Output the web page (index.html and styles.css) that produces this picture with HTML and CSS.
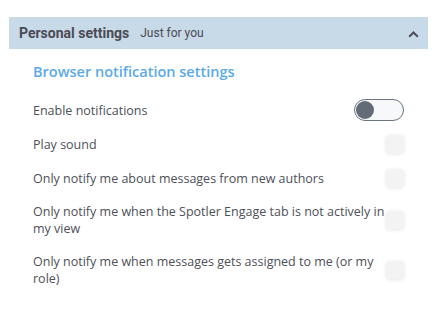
FILE: index.html
```html
<!DOCTYPE html>
<html lang="en">
<head>
<meta charset="utf-8">
<title>Personal settings</title>
<link rel="stylesheet" href="styles.css">
</head>
<body>
<div class="panel">
  <div class="panel-header">
    <span class="panel-title">Personal settings</span>
    <span class="panel-sub">Just for you</span>
    <svg class="chevron" width="11" height="7" viewBox="0 0 11 7">
      <path d="M1.2 5.8 L5.5 1.5 L9.8 5.8" fill="none" stroke="#4a4f5a" stroke-width="2"/>
    </svg>
  </div>
  <div class="panel-body">
    <h2 class="section-title">Browser notification settings</h2>
    <div class="setting">
      <span class="label">Enable notifications</span>
      <span class="toggle"><span class="knob"></span></span>
    </div>
    <div class="setting">
      <span class="label">Play sound</span>
      <span class="check"></span>
    </div>
    <div class="setting">
      <span class="label">Only notify me about messages from new authors</span>
      <span class="check"></span>
    </div>
    <div class="setting">
      <span class="label">Only notify me when the Spotler Engage tab is not actively in my view</span>
      <span class="check"></span>
    </div>
    <div class="setting">
      <span class="label">Only notify me when messages gets assigned to me (or my role)</span>
      <span class="check"></span>
    </div>
  </div>
</div>
</body>
</html>
```

FILE: styles.css
```css
body { margin: 0; padding: 0; background: #fff; font-family: "Open Sans", sans-serif; }

.panel { margin: 17px 11px 0 9px; }

.panel-header {
  display: flex;
  align-items: center;
  height: 32px;
  padding: 0 9px 0 10px;
  background-color: #c8d9e7;
  font-family: Roboto, sans-serif;
  color: #4a4b55;
}
.panel-title { font-size: 14px; font-weight: bold; }
.panel-sub { font-size: 12px; margin-left: 11px; }
.chevron { margin-left: auto; margin-top: 2px; }

.panel-body { padding: 0 24px; }

.section-title {
  margin: 0;
  padding-top: 13px;
  font-size: 14.5px;
  line-height: 20px;
  font-weight: 600;
  color: #5aaae8;
}

.setting {
  display: flex;
  align-items: center;
  justify-content: space-between;
  padding: 8px 0;
}
.section-title + .setting { margin-top: 9px; padding-bottom: 6px; }

.label {
  max-width: 353px;
  font-size: 12.5px;
  line-height: 17px;
  color: #4d5058;
}

.toggle {
  position: relative;
  width: 48px;
  height: 20px;
  border: 1px solid #6b7480;
  border-radius: 11px;
  background-color: #f7f8fa;
}
.knob {
  position: absolute;
  left: 1px;
  top: 1px;
  width: 18px;
  height: 18px;
  border-radius: 50%;
  background-color: #636b76;
}

.check {
  width: 18px;
  height: 18px;
  border-radius: 4px;
  background-color: #f3f3f3;
  box-shadow: 0 1px 4px rgba(0, 0, 0, 0.1);
}
```
